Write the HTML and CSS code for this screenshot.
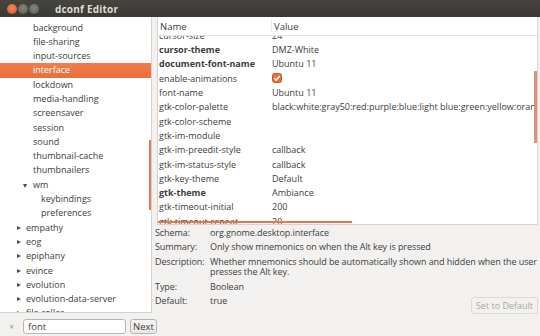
FILE: index.html
```html
<!DOCTYPE html>
<html lang="en">
<head>
    <meta charset="UTF-8">
    <title>dconf Editor</title>
    <link rel="stylesheet" href="styles.css">
</head>
<body>
    <div class="window">
        <div class="titlebar">
            <span class="btn close"></span>
            <span class="btn"></span>
            <span class="btn"></span>
            <span class="title">dconf Editor</span>
        </div>
        <div class="main">
            <div class="tree">
                <div class="tree-rows">
                    <div class="node d2">background</div>
                    <div class="node d2">file-sharing</div>
                    <div class="node d2">input-sources</div>
                    <div class="node d2 selected">interface</div>
                    <div class="node d2">lockdown</div>
                    <div class="node d2">media-handling</div>
                    <div class="node d2">screensaver</div>
                    <div class="node d2">session</div>
                    <div class="node d2">sound</div>
                    <div class="node d2">thumbnail-cache</div>
                    <div class="node d2">thumbnailers</div>
                    <div class="node d2 open"><span class="arrow down"></span>wm</div>
                    <div class="node d3">keybindings</div>
                    <div class="node d3">preferences</div>
                    <div class="node d1"><span class="arrow"></span>empathy</div>
                    <div class="node d1"><span class="arrow"></span>eog</div>
                    <div class="node d1"><span class="arrow"></span>epiphany</div>
                    <div class="node d1"><span class="arrow"></span>evince</div>
                    <div class="node d1"><span class="arrow"></span>evolution</div>
                    <div class="node d1"><span class="arrow"></span>evolution-data-server</div>
                    <div class="node d1"><span class="arrow"></span>file-roller</div>
                </div>
                <div class="vscroll left-scroll"></div>
            </div>
            <div class="right">
                <div class="list">
                    <div class="list-head">
                        <div class="col-name">Name</div>
                        <div class="col-value">Value</div>
                    </div>
                    <div class="list-body">
                        <div class="list-rows">
                            <div class="row"><span class="col-name">cursor-size</span><span class="col-value">24</span></div>
                            <div class="row bold"><span class="col-name">cursor-theme</span><span class="col-value">DMZ-White</span></div>
                            <div class="row bold"><span class="col-name">document-font-name</span><span class="col-value">Ubuntu 11</span></div>
                            <div class="row"><span class="col-name">enable-animations</span><span class="col-value"><svg class="check" width="10" height="10" viewBox="0 0 10 10"><rect x="0.5" y="0.5" width="9" height="9" rx="2" fill="#e8703c" stroke="#c85a2c"/><path d="M2.3 5.2 L4.2 7.1 L7.8 2.9" fill="none" stroke="#fff" stroke-width="1.5"/></svg></span></div>
                            <div class="row"><span class="col-name">font-name</span><span class="col-value">Ubuntu 11</span></div>
                            <div class="row"><span class="col-name">gtk-color-palette</span><span class="col-value">black:white:gray50:red:purple:blue:light blue:green:yellow:orange:lavender:brown:goldenrod4:dodger blue:pink:light green:gray10:gray30:gray75:gray90</span></div>
                            <div class="row"><span class="col-name">gtk-color-scheme</span><span class="col-value"></span></div>
                            <div class="row"><span class="col-name">gtk-im-module</span><span class="col-value"></span></div>
                            <div class="row"><span class="col-name">gtk-im-preedit-style</span><span class="col-value">callback</span></div>
                            <div class="row"><span class="col-name">gtk-im-status-style</span><span class="col-value">callback</span></div>
                            <div class="row"><span class="col-name">gtk-key-theme</span><span class="col-value">Default</span></div>
                            <div class="row bold"><span class="col-name">gtk-theme</span><span class="col-value">Ambiance</span></div>
                            <div class="row"><span class="col-name">gtk-timeout-initial</span><span class="col-value">200</span></div>
                            <div class="row"><span class="col-name">gtk-timeout-repeat</span><span class="col-value">20</span></div>
                        </div>
                        <div class="vscroll right-scroll"></div>
                        <div class="hscroll"></div>
                    </div>
                </div>
                <div class="details">
                    <div class="label">Schema:</div>
                    <div class="value wide">org.gnome.desktop.interface</div>
                    <div class="label">Summary:</div>
                    <div class="value wide">Only show mnemonics on when the Alt key is pressed</div>
                    <div class="label">Description:</div>
                    <div class="value wide">Whether mnemonics should be automatically shown and hidden when the user presses the Alt key.</div>
                    <div class="label">Type:</div>
                    <div class="value wide">Boolean</div>
                    <div class="label">Default:</div>
                    <div class="value">true</div>
                    <button class="reset" disabled>Set to Default</button>
                </div>
            </div>
        </div>
        <div class="searchbar">
            <span class="clear">&times;</span>
            <div class="search-input">font</div>
            <button class="next">Next</button>
        </div>
    </div>
</body>
</html>
```

FILE: styles.css
```css
body {
    margin: 0;
    padding: 0;
    width: 540px;
    height: 336px;
    overflow: hidden;
    font-family: "Open Sans", "Noto Sans", sans-serif;
    font-size: 9px;
    color: #3c3c3c;
    background-color: #f2f1f0;
}
.window {
    display: flex;
    flex-direction: column;
    height: 336px;
}
.titlebar {
    height: 17px;
    flex: none;
    display: flex;
    align-items: center;
    padding-left: 7px;
    gap: 1px;
    background: linear-gradient(#45443f, #3a3935);
}
.btn {
    width: 10px;
    height: 10px;
    border-radius: 50%;
    background: radial-gradient(circle at 50% 40%, #858580, #5a5955);
}
.btn.close {
    background: radial-gradient(circle at 50% 40%, #f48a5c, #d8521f);
}
.title {
    margin-left: 15px;
    color: #dfdbd2;
    font-weight: bold;
    font-size: 10px;
    letter-spacing: 0.2px;
}
.main {
    flex: none;
    height: 296px;
    display: flex;
}
.tree {
    position: relative;
    width: 151px;
    flex: none;
    background-color: #fff;
    border-right: 1px solid #d6d4d0;
    border-bottom: 1px solid #d6d4d0;
    overflow: hidden;
}
.tree-rows {
    padding-top: 3.5px;
}
.node {
    height: 14.3px;
    line-height: 14.3px;
    white-space: nowrap;
    position: relative;
}
.node.d1 {
    padding-left: 26px;
}
.node.d2 {
    padding-left: 33px;
}
.node.d3 {
    padding-left: 41px;
}
.node.selected {
    background: linear-gradient(#f07d4c, #e96f3b);
    color: #fff;
}
.arrow {
    position: absolute;
    left: 17px;
    top: 5px;
    width: 0;
    height: 0;
    border-top: 2.5px solid transparent;
    border-bottom: 2.5px solid transparent;
    border-left: 4px solid #4c4c4c;
}
.arrow.down {
    left: 23px;
    top: 6px;
    border-left: 2.5px solid transparent;
    border-right: 2.5px solid transparent;
    border-top: 4px solid #4c4c4c;
    border-bottom: none;
}
.vscroll {
    position: absolute;
    width: 2px;
    background-color: #e2784c;
}
.left-scroll {
    right: 0;
    top: 123px;
    height: 70px;
}
.right {
    flex: 1;
    display: flex;
    flex-direction: column;
    min-width: 0;
}
.list {
    height: 207px;
    margin-left: 5px;
    margin-right: 2px;
    background-color: #fff;
    border-left: 1px solid #d6d4d0;
    border-right: 1px solid #d6d4d0;
    border-bottom: 1px solid #d6d4d0;
    display: flex;
    flex-direction: column;
}
.list-head {
    height: 18px;
    flex: none;
    display: flex;
    align-items: center;
    border-bottom: 1px solid #e6e4e1;
    font-size: 9.5px;
}
.list-head .col-name {
    padding-left: 2px;
    border-right: 1px solid #ebe9e6;
}
.col-name {
    width: 111px;
    flex: none;
    padding-left: 1px;
    white-space: nowrap;
}
.col-value {
    padding-left: 2px;
    white-space: nowrap;
}
.list-body {
    flex: 1;
    position: relative;
    overflow: hidden;
}
.list-rows {
    margin-top: -7.15px;
}
.row {
    height: 14.3px;
    line-height: 14.3px;
    display: flex;
    white-space: nowrap;
}
.row.bold .col-name {
    font-weight: bold;
}
.check {
    vertical-align: -1px;
}
.right-scroll {
    right: 0;
    top: 35px;
    height: 72px;
    width: 3px;
    background-color: #db9278;
}
.hscroll {
    position: absolute;
    left: 0;
    bottom: 1px;
    width: 194px;
    height: 2px;
    background-color: #e2784c;
}
.details {
    flex: 1;
    display: grid;
    grid-template-columns: 55px 1fr auto;
    align-content: start;
    row-gap: 3.6px;
    padding: 3px 0 0 3px;
    line-height: 10.7px;
    letter-spacing: -0.08px;
}
.details .wide {
    grid-column: 2 / 4;
}
.reset {
    grid-column: 3;
    align-self: start;
    height: 17px;
    margin-top: 1.5px;
    margin-right: 2px;
    padding: 0 4px;
    font-family: inherit;
    font-size: 9px;
    color: #a9a7a3;
    background-color: #f2f1f0;
    border: 1px solid #dcdad6;
    border-radius: 3px;
}
.searchbar {
    flex: 1;
    display: flex;
    align-items: flex-start;
    padding-top: 6px;
}
.clear {
    width: 23px;
    text-align: center;
    color: #9c9a96;
    font-size: 9px;
    line-height: 15px;
}
.search-input {
    width: 97px;
    height: 13px;
    line-height: 13px;
    padding-left: 4px;
    background-color: #fff;
    border: 1px solid #b9b6b1;
    border-radius: 3px;
    font-size: 9.5px;
}
.next {
    margin-left: 4px;
    width: 27px;
    height: 15px;
    padding: 0;
    font-family: inherit;
    font-size: 9.5px;
    color: #3c3c3c;
    background: linear-gradient(#f8f7f6, #e9e7e4);
    border: 1px solid #b9b6b1;
    border-radius: 3px;
}
```
